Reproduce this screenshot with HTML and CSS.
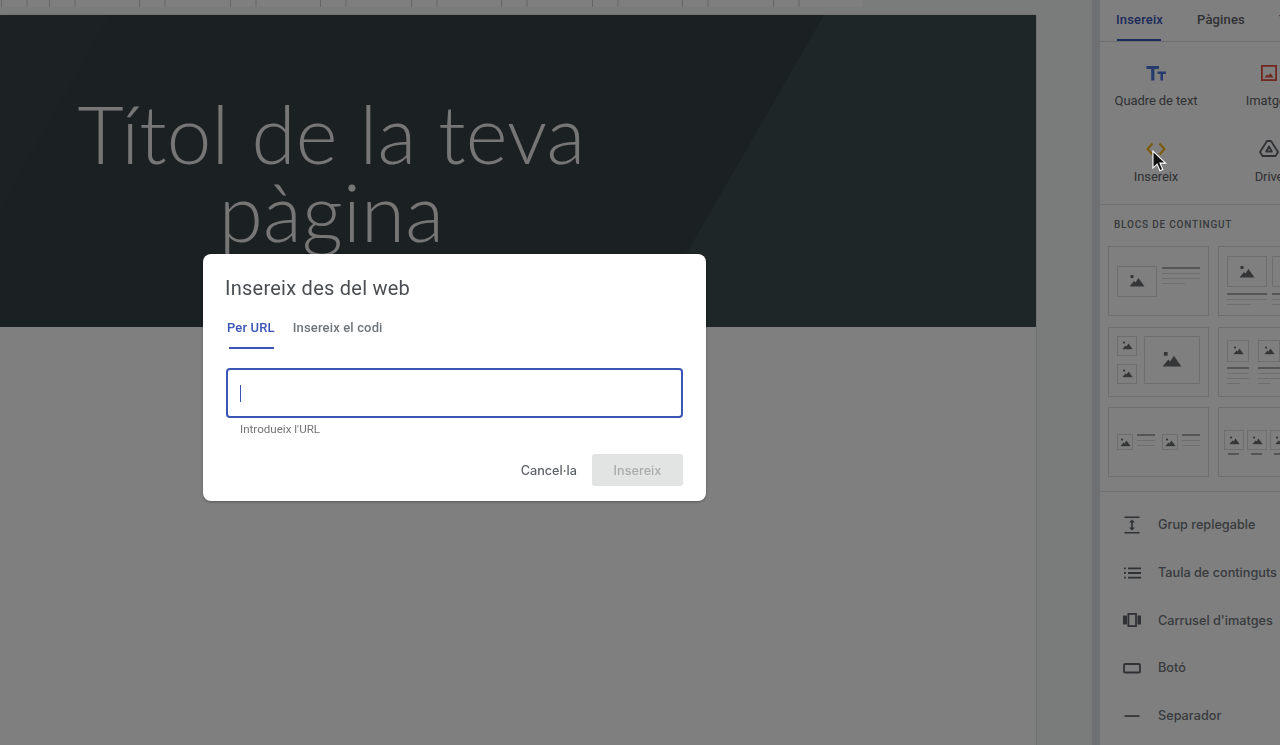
FILE: index.html
```html
<!DOCTYPE html>
<html lang="ca">

<head>
    <meta charset="UTF-8">
    <meta name="viewport" content="width=device-width, initial-scale=1.0">
    <title>Insereix des del web</title>
    <link rel="stylesheet" href="styles.css">
</head>

<body>
    <div class="app">
        <!-- Editor area -->
        <main class="workspace">
            <div class="ruler"></div>
            <div class="page">
                <header class="hero">
                    <svg class="hero-shape" viewBox="0 0 1036 312" preserveAspectRatio="none">
                        <polygon points="824,0 1036,0 1036,312 644,312" fill="#3c4c50" />
                        <polygon points="0,0 110,0 0,194" fill="#384246" />
                    </svg>
                    <h1 class="hero-title">Títol de la teva pàgina</h1>
                </header>
            </div>
        </main>

        <div class="scroll-rail"></div>

        <!-- Right hand panel -->
        <aside class="panel">
            <nav class="panel-tabs">
                <span class="panel-tab active">Insereix</span>
                <span class="panel-tab">Pàgines</span>
                <span class="panel-tab">Temes</span>
            </nav>

            <section class="tools">
                <div class="tool">
                    <svg class="tool-icon" viewBox="0 0 24 24">
                        <path d="M2.500 5h12.500v3h-4.600v11.500H7.200V8H2.500z" fill="#4a76d8" />
                        <path d="M13.500 10.500h8.500v2.400h-3V19.500h-2.500v-6.600h-3z" fill="#4a76d8" />
                    </svg>
                    <span>Quadre de text</span>
                </div>
                <div class="tool">
                    <svg class="tool-icon" viewBox="0 0 24 24">
                        <rect x="4.900" y="4.900" width="14.200" height="14.200" fill="none" stroke="#e0503e" stroke-width="1.800" />
                        <path d="M7.500 16.500l2.500-3 1.500 1.300 2-2.800 3 4.500z" fill="#e0503e" />
                    </svg>
                    <span>Imatges</span>
                </div>
                <div class="tool">
                    <svg class="tool-icon" viewBox="0 0 24 24">
                        <path d="M8.500 6.500L3.500 12l5 5.500M15.500 6.500L20.500 12l-5 5.500" fill="none" stroke="#f4b400" stroke-width="2" />
                    </svg>
                    <span>Insereix</span>
                </div>
                <div class="tool">
                    <svg class="tool-icon" viewBox="0 0 24 24">
                        <path d="M10 4h4l7 11-2.500 4h-13L3 15z M12 9.500l-2.800 5h5.600z" fill="none" stroke="#5f6368" stroke-width="1.800" stroke-linejoin="round" />
                    </svg>
                    <span>Drive</span>
                </div>
            </section>

            <section class="blocks">
                <h2 class="blocks-title">BLOCS DE CONTINGUT</h2>
                <div class="block-grid">
                    <div class="block block-a">
                        <div class="thumb thumb-wide"><svg class="pic" viewBox="0 0 16 12"><use href="#mountain" /></svg></div>
                        <div class="lines">
                            <i class="line strong"></i><i class="line"></i><i class="line"></i><i class="line short"></i>
                        </div>
                    </div>
                    <div class="block block-b">
                        <div class="col">
                            <div class="thumb thumb-b"><svg class="pic" viewBox="0 0 16 12"><use href="#mountain" /></svg></div>
                            <i class="line strong"></i><i class="line"></i><i class="line short"></i>
                        </div>
                        <div class="col">
                            <div class="thumb thumb-b"><svg class="pic" viewBox="0 0 16 12"><use href="#mountain" /></svg></div>
                            <i class="line strong"></i><i class="line"></i><i class="line short"></i>
                        </div>
                    </div>
                    <div class="block block-c">
                        <div class="stack">
                            <div class="thumb thumb-s"><svg class="pic" viewBox="0 0 16 12"><use href="#mountain" /></svg></div>
                            <div class="thumb thumb-s"><svg class="pic" viewBox="0 0 16 12"><use href="#mountain" /></svg></div>
                        </div>
                        <div class="thumb thumb-l"><svg class="pic pic-l" viewBox="0 0 16 12"><use href="#mountain" /></svg></div>
                    </div>
                    <div class="block block-d">
                        <div class="col">
                            <div class="thumb thumb-d"><svg class="pic" viewBox="0 0 16 12"><use href="#mountain" /></svg></div>
                            <i class="line strong"></i><i class="line"></i><i class="line"></i><i class="line short"></i>
                        </div>
                        <div class="col">
                            <div class="thumb thumb-d"><svg class="pic" viewBox="0 0 16 12"><use href="#mountain" /></svg></div>
                            <i class="line strong"></i><i class="line"></i><i class="line"></i><i class="line short"></i>
                        </div>
                    </div>
                    <div class="block block-e">
                        <div class="pair">
                            <div class="thumb thumb-xs"><svg class="pic" viewBox="0 0 16 12"><use href="#mountain" /></svg></div>
                            <div class="lines"><i class="line strong"></i><i class="line"></i><i class="line"></i></div>
                        </div>
                        <div class="pair">
                            <div class="thumb thumb-xs"><svg class="pic" viewBox="0 0 16 12"><use href="#mountain" /></svg></div>
                            <div class="lines"><i class="line strong"></i><i class="line"></i><i class="line"></i></div>
                        </div>
                    </div>
                    <div class="block block-f">
                        <div class="col">
                            <div class="thumb thumb-f"><svg class="pic" viewBox="0 0 16 12"><use href="#mountain" /></svg></div>
                            <i class="line strong"></i>
                        </div>
                        <div class="col">
                            <div class="thumb thumb-f"><svg class="pic" viewBox="0 0 16 12"><use href="#mountain" /></svg></div>
                            <i class="line strong"></i>
                        </div>
                        <div class="col">
                            <div class="thumb thumb-f"><svg class="pic" viewBox="0 0 16 12"><use href="#mountain" /></svg></div>
                            <i class="line strong"></i>
                        </div>
                    </div>
                </div>
            </section>

            <ul class="items">
                <li class="item">
                    <svg class="item-icon" viewBox="0 0 24 24">
                        <path d="M4.500 3.500h15v1.600h-15zM4.500 19h15v1.600h-15zM12 6.500l3 3h-2.200v5H15l-3 3-3-3h2.200v-5H9z" fill="#5f6368" />
                    </svg>
                    <span>Grup replegable</span>
                </li>
                <li class="item">
                    <svg class="item-icon" viewBox="0 0 24 24">
                        <path d="M8 6.500h13v1.800H8zM8 11.100h13v1.800H8zM8 15.700h13v1.800H8zM4 6.500h1.800v1.800H4zM4 11.100h1.800v1.800H4zM4 15.700h1.800v1.800H4z" fill="#5f6368" />
                    </svg>
                    <span>Taula de continguts</span>
                </li>
                <li class="item">
                    <svg class="item-icon" viewBox="0 0 24 24">
                        <path d="M3 7.500h4v9H3zM17.500 7.500h3.500v9h-3.500z" fill="#5f6368" />
                        <rect x="8.400" y="5.900" width="7.600" height="12.200" fill="none" stroke="#5f6368" stroke-width="1.800" />
                    </svg>
                    <span>Carrusel d'imatges</span>
                </li>
                <li class="item">
                    <svg class="item-icon" viewBox="0 0 24 24">
                        <rect x="4" y="8" width="16" height="8.500" rx="1" fill="none" stroke="#5f6368" stroke-width="1.800" />
                    </svg>
                    <span>Botó</span>
                </li>
                <li class="item">
                    <svg class="item-icon" viewBox="0 0 24 24">
                        <path d="M4.500 11.200h15v1.700h-15z" fill="#5f6368" />
                    </svg>
                    <span>Separador</span>
                </li>
            </ul>
        </aside>
    </div>

    <svg class="defs" width="0" height="0">
        <symbol id="mountain" viewBox="0 0 16 12">
            <path d="M0.500 11.500L5 6l1.500 1.500L9.500 3l6 8.500z" fill="#6a6d71" />
            <rect x="1.500" y="0" width="3" height="3" fill="#6a6d71" />
        </symbol>
    </svg>

    <div class="scrim"></div>

    <!-- Dialog -->
    <div class="dialog">
        <h2 class="dialog-title">Insereix des del web</h2>
        <div class="dialog-tabs">
            <span class="dialog-tab active">Per URL</span>
            <span class="dialog-tab">Insereix el codi</span>
        </div>
        <div class="url-field"><span class="caret"></span></div>
        <div class="url-hint">Introdueix l'URL</div>
        <div class="dialog-actions">
            <button class="btn-cancel">Cancel·la</button>
            <button class="btn-insert" disabled>Insereix</button>
        </div>
    </div>

    <svg class="cursor" viewBox="0 0 16 24">
        <path d="M1 1v18l4.500-4.200 3 7 3-1.300-3-6.800H14.500z" fill="#111" stroke="#fff" stroke-width="1.200" />
    </svg>
</body>

</html>
```

FILE: styles.css
```css
* {
    box-sizing: border-box;
}

html,
body {
    height: 100%;
    margin: 0;
    overflow: hidden;
}

body {
    font-family: Roboto, sans-serif;
    background-color: #fff;
    color: #5f6368;
}

.app {
    display: flex;
    width: 1400px;
    height: 745px;
}

.defs {
    position: absolute;
}

/* Editor area */
.workspace {
    width: 1092px;
    flex: none;
    background-color: #f5f6f7;
}

/* ticks repeat every 90.5px, a short gap and a long one */
.ruler {
    width: 862px;
    height: 7px;
    background-color: #fff;
    background-image:
        repeating-linear-gradient(90deg, #cfcfcf 0, #cfcfcf 1px, transparent 1px, transparent 90.5px),
        repeating-linear-gradient(90deg, #cfcfcf 0, #cfcfcf 1px, transparent 1px, transparent 90.5px);
    background-position: 49px 0, 74.500px 0;
}

.page {
    width: 1036px;
    height: 738px;
    margin-top: 8px;
    background-color: #fff;
    box-shadow: 0 0 2px rgba(0, 0, 0, 0.2);
}

.hero {
    position: relative;
    height: 312px;
    overflow: hidden;
    background-color: #364044;
}

.hero-shape {
    position: absolute;
    top: 0;
    left: 0;
    width: 100%;
    height: 100%;
}

.hero-title {
    position: relative;
    width: 663px;
    margin: 0;
    padding-top: 79px;
    text-align: center;
    font-family: Lato, sans-serif;
    font-size: 80px;
    font-weight: 300;
    line-height: 78px;
    letter-spacing: 0.2px;
    color: #ececec;
}

.scroll-rail {
    width: 8px;
    flex: none;
    background-color: #dfe1e3;
}

/* Right hand panel */
.panel {
    width: 300px;
    flex: none;
    background-color: #fff;
}

.panel-tabs {
    display: flex;
    height: 42px;
    padding-left: 16px;
    border-bottom: 1px solid #dadce0;
}

.panel-tab {
    position: relative;
    margin-right: 34px;
    padding-top: 12px;
    font-size: 13px;
    font-weight: 500;
    letter-spacing: 0.15px;
}

.panel-tab.active {
    color: #3b55b5;
}

.panel-tab.active::after {
    content: "";
    position: absolute;
    left: 1px;
    right: 2px;
    bottom: 0;
    height: 2px;
    background-color: #3b55b5;
}

.tools {
    display: grid;
    grid-template-columns: 112px 114px;
    grid-auto-rows: 76px;
    padding: 19px 0 0 0;
    height: 163px;
    border-bottom: 1px solid #dadce0;
}

.tool {
    display: flex;
    flex-direction: column;
    align-items: center;
    font-size: 13px;
    letter-spacing: -0.1px;
    white-space: nowrap;
}

.tool span {
    margin-top: 8px;
}

.tool-icon {
    width: 24px;
    height: 24px;
}

.blocks {
    height: 287px;
    padding: 13px 0 0 8px;
    border-bottom: 1px solid #dadce0;
}

.blocks-title {
    margin: 0 0 15px 6px;
    font-size: 10px;
    font-weight: 500;
    line-height: 13px;
    letter-spacing: 0.8px;
    color: #70757a;
}

.block-grid {
    display: grid;
    grid-template-columns: 101px 101px;
    grid-auto-rows: 70px;
    gap: 10.500px 9px;
}

.block {
    display: flex;
    padding: 8px;
    border: 1px solid #dadce0;
}

.thumb {
    display: flex;
    align-items: center;
    justify-content: center;
    border: 1px solid #dadce0;
}

.pic {
    width: 16px;
    height: 12px;
}

.pic-l {
    width: 20px;
    height: 15px;
}

.line {
    display: block;
    height: 1px;
    margin-bottom: 4px;
    background-color: #dadce0;
}

.line.strong {
    height: 2px;
    background-color: #a8abaf;
}

.line.short {
    width: 60%;
}

.lines {
    flex: 1;
}

.block-a {
    align-items: center;
    gap: 5px;
}

.thumb-wide {
    width: 40px;
    height: 31px;
}

.block-a .lines {
    margin-top: -8px;
}

.block-b {
    gap: 5px;
    padding: 9px 0 0 8px;
}

.col {
    flex: none;
}

.thumb-b {
    width: 40px;
    height: 31px;
    margin-bottom: 6px;
}

.block-b .col {
    width: 40px;
}

.block-c {
    gap: 7px;
}

.stack {
    display: flex;
    flex-direction: column;
    gap: 8px;
}

.thumb-s {
    width: 20px;
    height: 20px;
}

.thumb-l {
    width: 57px;
    height: 48px;
}

.block-d {
    gap: 9px;
    padding: 12px 0 0 8px;
}

.block-d .col {
    width: 22px;
}

.thumb-d {
    width: 22px;
    height: 22px;
    margin-bottom: 5px;
}

.block-e {
    align-items: center;
    gap: 7px;
}

.pair {
    display: flex;
    gap: 4px;
    align-items: flex-start;
    width: 39px;
}

.thumb-xs {
    width: 16px;
    height: 16px;
    flex: none;
}

.thumb-xs .pic,
.thumb-d .pic,
.thumb-s .pic,
.thumb-f .pic {
    width: 11px;
    height: 9px;
}

.block-f {
    gap: 3px;
    padding: 22px 0 0 5px;
}

.block-f .col {
    width: 20px;
}

.thumb-f {
    width: 20px;
    height: 20px;
    margin-bottom: 3px;
}

.block-f .line.strong {
    width: 11px;
    margin-left: 4px;
}

.items {
    list-style: none;
    margin: 0;
    padding: 9px 0 0 0;
}

.item {
    display: flex;
    align-items: center;
    gap: 14px;
    height: 47.700px;
    padding-left: 20px;
    font-family: Inter, sans-serif;
    font-size: 12.700px;
    font-weight: 500;
    color: #70757a;
    white-space: nowrap;
}

.item-icon {
    width: 24px;
    height: 24px;
    flex: none;
}

/* Dialog on top */
.scrim {
    position: fixed;
    top: 0;
    right: 0;
    bottom: 0;
    left: 0;
    background-color: rgba(0, 0, 0, 0.5);
}

.dialog {
    position: fixed;
    top: 254px;
    left: 203px;
    width: 503px;
    height: 247px;
    padding: 21px 23px 0 22px;
    background-color: #fff;
    border-radius: 8px;
    box-shadow: 0 1px 3px rgba(0, 0, 0, 0.3);
}

.dialog-title {
    margin: 0;
    font-size: 20px;
    font-weight: 400;
    line-height: 26px;
    letter-spacing: 0.25px;
    color: #4a4e52;
}

.dialog-tabs {
    display: flex;
    gap: 16px;
    height: 48px;
    margin-top: 14px;
    font-size: 13px;
    font-weight: 500;
    letter-spacing: 0.15px;
    color: #70757a;
}

.dialog-tab {
    position: relative;
    padding: 0 0 0 2px;
    line-height: 26px;
}

.dialog-tab.active {
    color: #3b55b5;
}

.dialog-tab.active::after {
    content: "";
    position: absolute;
    left: 4px;
    right: 1px;
    top: 32px;
    height: 2px;
    background-color: #3b55b5;
}

.url-field {
    height: 50px;
    margin-top: 5px;
    margin-left: 1px;
    padding: 15px 0 0 12px;
    border: 2px solid #3b55b5;
    border-radius: 4px;
}

.caret {
    display: block;
    width: 1px;
    height: 17px;
    background-color: #3b55b5;
}

.url-hint {
    margin: 4px 0 0 15px;
    font-size: 11.600px;
    line-height: 14px;
    color: #757575;
}

.dialog-actions {
    display: flex;
    justify-content: flex-end;
    align-items: center;
    gap: 15px;
    margin-top: 18px;
}

.btn-cancel {
    padding: 0;
    border: none;
    background: none;
    font-family: Inter, sans-serif;
    font-size: 12.700px;
    font-weight: 500;
    font-feature-settings: "locl" 0, "calt" 0;
    color: #5f6368;
}

.btn-insert {
    width: 91px;
    height: 32px;
    border: none;
    border-radius: 3px;
    background-color: #e2e3e3;
    font-family: Inter, sans-serif;
    font-size: 12.700px;
    font-weight: 500;
    color: #a9abad;
}

.cursor {
    position: fixed;
    top: 150px;
    left: 1152px;
    width: 15px;
    height: 23px;
}
```
